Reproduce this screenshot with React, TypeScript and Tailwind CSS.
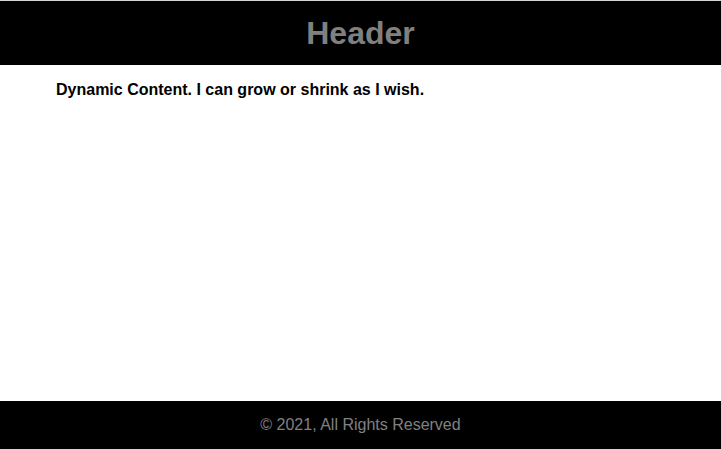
import React from 'react';

export default function App() {
  return (
    <div className="flex min-h-screen flex-col bg-white font-['Liberation_Sans',Arial,sans-serif]">
      <div className="h-px bg-[#d4d4d4]" />
      <header className="flex h-16 items-center justify-center bg-black">
        <h1 className="text-[32px] font-bold leading-none text-[#808080]">Header</h1>
      </header>
      <main className="flex-1 px-14 pt-4">
        <p className="text-base font-bold leading-[18px] text-black">
          Dynamic Content. I can grow or shrink as I wish.
        </p>
      </main>
      <footer className="flex h-12 items-center justify-center bg-black">
        <span className="text-base text-[#808080]">© 2021, All Rights Reserved</span>
      </footer>
    </div>
  );
}
